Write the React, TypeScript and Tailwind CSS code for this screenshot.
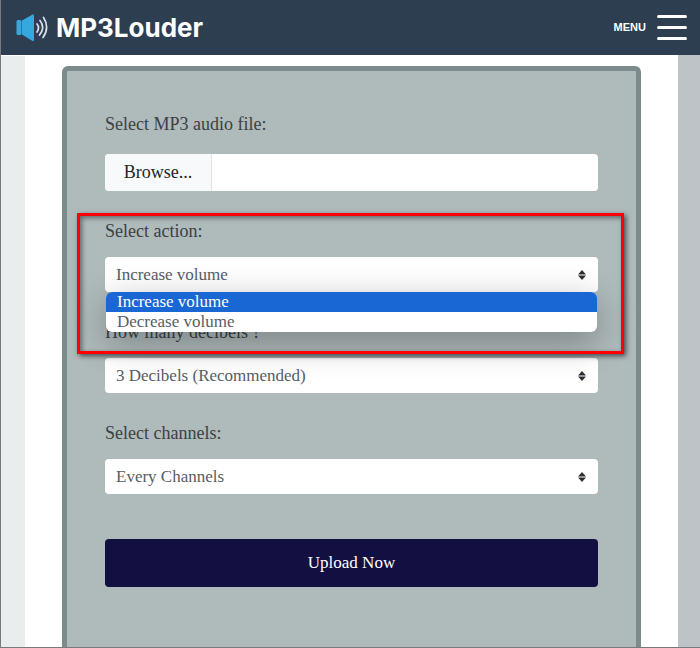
import React, { useState } from "react";

const labelClass = "block text-[18px] leading-7 text-[#3b4144]";

function SpeakerLogo() {
  return (
    <svg width="32" height="28" viewBox="0 0 32 28" fill="none" aria-hidden="true">
      <rect x="0.500" y="6" width="5" height="15" rx="1.500" fill="#35a9df" />
      <path d="M6 6.500 L16.500 0.500 Q18 0 18 1.500 V26 Q18 27.500 16.500 27 L6 20.500 Z" fill="#35a9df" />
      <g stroke="#d9e1e6" strokeWidth="1.700" strokeLinecap="round">
        <path d="M21 10 Q24 13.500 21 18" />
        <path d="M24 6.500 Q29.500 13.500 23.500 21" />
        <path d="M27.500 3.500 Q34 13.500 27 23.500" />
      </g>
    </svg>
  );
}

type SelectFieldProps = {
  id: string;
  label: string;
  options: string[];
  tint?: string;
};

function SelectField({ id, label, options, tint = "bg-white" }: SelectFieldProps) {
  const [value, setValue] = useState(options[0]);
  return (
    <>
      <label htmlFor={id} className={labelClass}>
        {label}
      </label>
      <div className="mt-3 grid items-center">
        <select
          id={id}
          value={value}
          onChange={(e) => setValue(e.target.value)}
          className={`col-start-1 row-start-1 h-[35px] w-full appearance-none rounded-sm px-[11px] text-[17px] text-[#565e65] outline-none ${tint}`}
        >
          {options.map((option) => (
            <option key={option}>{option}</option>
          ))}
        </select>
        <svg
          className="pointer-events-none col-start-1 row-start-1 mr-3 justify-self-end"
          width="8"
          height="10"
          viewBox="0 0 8 10"
          fill="#2b3035"
          aria-hidden="true"
        >
          <path d="M4 0 L8 4.400 H0 Z M0 5.600 H8 L4 10 Z" />
        </svg>
      </div>
    </>
  );
}

export default function App() {
  return (
    <div className="flex min-h-screen flex-col border-b border-l border-[#777b7d] bg-white font-['Liberation_Serif',serif]">
      <header className="flex h-[55px] items-center justify-between bg-[#2c3e50] pr-[13px] pl-[15px]">
        <a href="#" className="flex items-center gap-2 text-white">
          <SpeakerLogo />
          <span className="font-['Inter',sans-serif] text-[26px] leading-8 font-bold">MP3Louder</span>
        </a>
        <button type="button" className="flex items-center gap-[11px] font-['Liberation_Sans',sans-serif] text-[11px] font-bold text-white">
          MENU
          <span className="flex flex-col gap-2">
            <span className="h-[3px] w-[30px] rounded-full bg-white" />
            <span className="h-[3px] w-[30px] rounded-full bg-white" />
            <span className="h-[3px] w-[30px] rounded-full bg-white" />
          </span>
        </button>
      </header>

      <div className="flex flex-1">
        <div className="mt-px w-6 shrink-0 bg-[#e9eded]" />
        <main className="flex flex-1 px-[37px] pt-[11px]">
          <form className="flex-1 rounded-t-md border-x-[5px] border-t-[5px] border-[#7c8c8d] bg-[#afbabb] px-[38px] pt-[39px] pb-[60px]">
            <label htmlFor="audio" className={labelClass}>
              Select MP3 audio file:
            </label>
            <label
              htmlFor="audio"
              className="mt-4 flex h-[37px] overflow-hidden rounded-sm bg-white text-[18px] leading-[37px] text-[#212529]"
            >
              <span className="w-[107px] border-r border-[#dfe3e8] bg-[#f8f9fa] text-center">Browse...</span>
              <input id="audio" type="file" className="sr-only" />
            </label>

            <div className="relative z-10 mt-[26px]">
              <SelectField id="action" label="Select action:" options={["Increase volume", "Decrease volume"]} />
              <ul
                role="listbox"
                aria-label="Select action"
                className="absolute inset-x-px top-full overflow-hidden rounded-md bg-white text-[17px] leading-5 text-[#565e65] shadow-[0_10px_36px_rgba(0,0,0,0.3)]"
              >
                <li role="option" aria-selected="true" className="bg-[#1967d2] px-[11px] text-white">
                  Increase volume
                </li>
                <li role="option" aria-selected="false" className="px-[11px]">
                  Decrease volume
                </li>
              </ul>
              <div className="pointer-events-none absolute -top-1 -right-[26px] -left-7 h-[141px] border-3 border-[#ff0000] shadow-[2px_2px_5px_rgba(0,0,0,0.6),inset_2px_2px_5px_rgba(0,0,0,0.45)]" />
            </div>

            <div className="mt-[26px]">
              <SelectField id="decibels" label="How many decibels ?" options={["3 Decibels (Recommended)"]} />
            </div>

            <div className="mt-[26px]">
              <SelectField id="channels" label="Select channels:" options={["Every Channels"]} />
            </div>

            <button
              type="submit"
              className="mt-[45px] h-12 w-full rounded-sm bg-[#130f40] text-[17px] text-white"
            >
              Upload Now
            </button>
          </form>
        </main>
        <div className="w-[22px] shrink-0 bg-[#bdc3c7]" />
      </div>
    </div>
  );
}
